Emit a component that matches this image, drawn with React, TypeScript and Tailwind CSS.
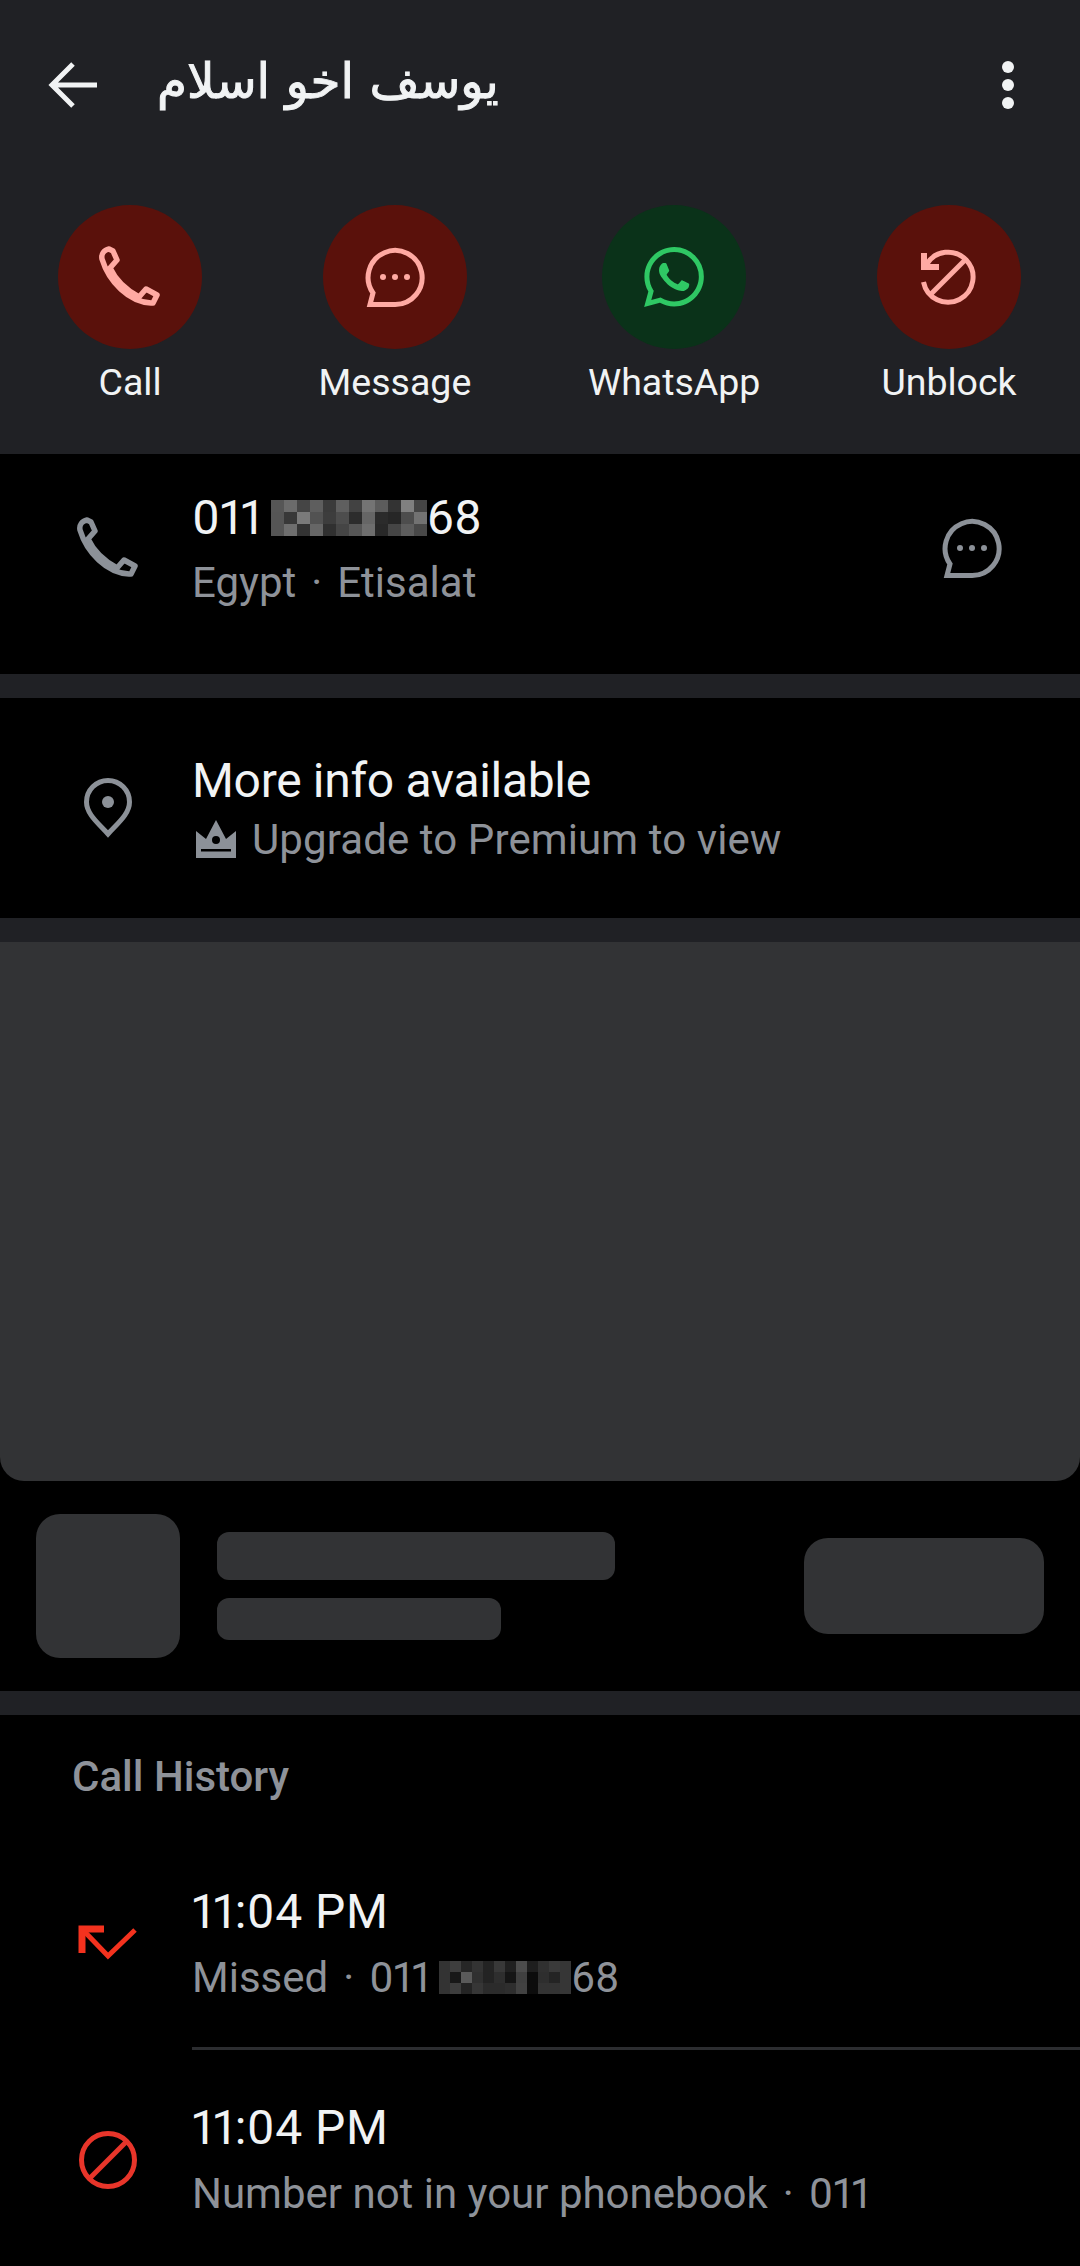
import { SiWhatsapp } from 'react-icons/si'

const PIXELS_LARGE = [
  '#565656', '#6b6b6b', '#454545', '#5e5e5e', '#3b3b3b', '#5f5f5f', '#424242', '#747474', '#5c5c5c', '#333333', '#808080', '#454545',
  '#555555', '#383838', '#7a7a7a', '#525252', '#3d3d3d', '#4d4d4d', '#2c2c2c', '#666666', '#2b2b2b', '#262626', '#4d4d4d', '#727272',
  '#555555', '#6e6e6e', '#333333', '#666666', '#303030', '#454545', '#565656', '#6e6e6e', '#282828', '#454545', '#5d5d5d', '#484848',
]

const PIXELS_SMALL = [
  '#333333', '#3e3e3e', '#262626', '#333333', '#232323', '#383838', '#202020', '#4c4c4c', '#1e1e1e', '#303030', '#3a3a3a', '#363636',
  '#333333', '#181818', '#5a5a5a', '#303030', '#232323', '#2e2e2e', '#151515', '#404040', '#0c0c0c', '#2e2e2e', '#242424', '#363636',
  '#333333', '#3d3d3d', '#242424', '#363636', '#2b2b2b', '#2b2b2b', '#2e2e2e', '#424242', '#0c0c0c', '#333333', '#333333', '#363636',
]

function Pixels({ colors, className }: { colors: string[]; className: string }) {
  return (
    <div className={`grid grid-cols-12 grid-rows-3 shrink-0 ${className}`}>
      {colors.map((c, i) => (
        <div key={i} style={{ backgroundColor: c }} />
      ))}
    </div>
  )
}

function PhoneIcon({ className }: { className: string }) {
  return (
    <svg viewBox="10 12 62 62" className={`w-[62px] h-[62px] ${className}`} fill="none" stroke="currentColor" strokeWidth="5.5" strokeLinejoin="round">
      <path d="M20 15 L24 17 L28 26 L21 34 C27 47 37 56 50 63 L57 55 L68 61 L64 69 L62 69 C40 68 20 48 13 25 C12 20 15 16 20 15 Z" />
    </svg>
  )
}

function BubbleIcon({ className }: { className: string }) {
  return (
    <svg viewBox="0 0 60 60" className={`w-[60px] h-[60px] ${className}`} fill="none" stroke="currentColor" strokeWidth="5">
      <path d="M8 46 A27 27 0 1 1 30 57.5 L5 57.5 Z" />
      <circle cx="18" cy="30" r="3" fill="currentColor" stroke="none" />
      <circle cx="30" cy="30" r="3" fill="currentColor" stroke="none" />
      <circle cx="42" cy="30" r="3" fill="currentColor" stroke="none" />
    </svg>
  )
}

function UnblockIcon({ className }: { className: string }) {
  return (
    <svg viewBox="0 0 90 85" className={`w-[90px] h-[85px] ${className}`} fill="none" stroke="currentColor" strokeWidth="5">
      <path d="M22.5 29.5 A25 25 0 1 1 19.5 47" />
      <path d="M61.5 24.5 L26.5 59.5" />
      <path d="M20 18 V32 H35" strokeWidth="6" />
    </svg>
  )
}

function ActionButton({ label, bg, children }: { label: string; bg: string; children: React.ReactNode }) {
  return (
    <div className="flex flex-col items-center">
      <div className={`w-[144px] h-[144px] rounded-full flex items-center justify-center ${bg}`}>{children}</div>
      <span className="mt-[7px] h-[52px] leading-[52px] text-[37.5px] text-[#f1f3f4]">{label}</span>
    </div>
  )
}

function Dot() {
  return <span className="mx-[15px]">·</span>
}

function Gap() {
  return <div className="h-[24px] bg-[#202125]" />
}

export default function App() {
  return (
    <div className="w-[1080px] h-[2266px] overflow-hidden bg-black font-['Roboto',sans-serif] proportional-nums">
      <header className="h-[454px] bg-[#202125]">
        <div className="h-[170px] flex items-center pl-[48px] pr-[66px]">
          <svg viewBox="0 0 50 48" className="w-[50px] h-[48px] text-[#f1f3f4]" fill="none" stroke="currentColor" strokeWidth="5">
            <path d="M49 24 H5 M25 3 L4 24 L25 45" />
          </svg>
          <h1 dir="rtl" className="ml-[59px] -mt-[8px] text-[48.5px] leading-[60px] text-[#f1f3f4] font-['DejaVu_Sans',sans-serif] font-normal [-webkit-text-stroke:1px_#f1f3f4]">
            يوسف اخو اسلام
          </h1>
          <div className="ml-auto flex flex-col gap-[6px]">
            <span className="w-[12px] h-[12px] rounded-full bg-[#f1f3f4]" />
            <span className="w-[12px] h-[12px] rounded-full bg-[#f1f3f4]" />
            <span className="w-[12px] h-[12px] rounded-full bg-[#f1f3f4]" />
          </div>
        </div>
        <div className="mt-[35px] pl-[58px] pr-[59px] flex justify-between">
          <ActionButton label="Call" bg="bg-[#5a110b]">
            <PhoneIcon className="text-[#ffaaa3]" />
          </ActionButton>
          <ActionButton label="Message" bg="bg-[#5a110b]">
            <BubbleIcon className="text-[#ffaaa3]" />
          </ActionButton>
          <ActionButton label="WhatsApp" bg="bg-[#0a3219]">
            <SiWhatsapp size={60} className="text-[#2fc864]" />
          </ActionButton>
          <ActionButton label="Unblock" bg="bg-[#5a110b]">
            <UnblockIcon className="text-[#ffaaa3]" />
          </ActionButton>
        </div>
      </header>

      <section className="h-[220px] flex">
        <div className="w-[192px] shrink-0 flex justify-center pl-[24px] pt-[63px]">
          <PhoneIcon className="text-[#8c9198]" />
        </div>
        <div className="pt-[34px]">
          <div className="flex items-center h-[60px] text-[48px] text-[#f1f3f4]">
            <span>011</span>
            <Pixels colors={PIXELS_LARGE} className="ml-[9px] w-[156px] h-[37px]" />
            <span>68</span>
          </div>
          <p className="mt-[7px] h-[56px] leading-[56px] text-[42px] text-[#8e9299]">Egypt<Dot />Etisalat</p>
        </div>
        <div className="ml-auto pr-[78px] pt-[64px]">
          <BubbleIcon className="text-[#8c9198]" />
        </div>
      </section>

      <Gap />

      <section className="h-[220px] flex">
        <div className="w-[192px] shrink-0 flex justify-center pl-[24px] pt-[80px]">
          <svg viewBox="0 0 48 60" className="w-[48px] h-[60px] text-[#8c9198]" fill="none" stroke="currentColor" strokeWidth="5">
            <path d="M24 56 C14 45 2.5 36 2.5 24 A21.5 21.5 0 0 1 45.5 24 C45.5 36 34 45 24 56 Z" />
            <circle cx="24" cy="24" r="6" fill="currentColor" stroke="none" />
          </svg>
        </div>
        <div className="pt-[53px]">
          <p className="h-[60px] leading-[60px] text-[48px] tracking-[-0.32px] text-[#f1f3f4]">More info available</p>
          <div className="flex items-center h-[56px] text-[42px] text-[#8e9299]">
            <svg viewBox="0 0 40 40" className="w-[40px] h-[40px] mr-[16px] ml-[4px] text-[#8c9198]">
              <path d="M0 12 L10 20 L20 1 L30 20 L40 12 V39 H0 Z" fill="currentColor" />
              <circle cx="20" cy="21" r="4" fill="#000" />
              <rect x="5" y="30" width="30" height="2.5" fill="#000" />
            </svg>
            <span className="tracking-[0.1px]">Upgrade to Premium to view</span>
          </div>
        </div>
      </section>

      <Gap />

      <div className="h-[539px] bg-[#323335] rounded-b-[24px]" />

      <section className="h-[210px] flex items-center justify-between px-[36px]">
        <div className="flex items-center gap-[37px]">
          <div className="w-[144px] h-[144px] rounded-[24px] bg-[#323335]" />
          <div className="flex flex-col gap-[18px]">
            <div className="w-[398px] h-[48px] rounded-[12px] bg-[#323335]" />
            <div className="w-[284px] h-[42px] rounded-[12px] bg-[#323335]" />
          </div>
        </div>
        <div className="w-[240px] h-[96px] rounded-[24px] bg-[#323335]" />
      </section>

      <Gap />

      <section>
        <h2 className="mt-[32px] pl-[72px] h-[60px] leading-[60px] text-[42px] font-medium text-[#8e9299]">Call History</h2>
        <div className="mt-[27px] h-[216px] flex">
          <div className="w-[192px] shrink-0 pl-[78px] pt-[91px]">
            <svg viewBox="0 0 60 36" className="w-[60px] h-[36px] text-[#f4321e]" fill="none" stroke="currentColor" strokeWidth="5">
              <path d="M4 28 V4 H26" strokeWidth="7" />
              <path d="M4 4 L30 31 L57 5" />
            </svg>
          </div>
          <div className="flex-1 border-b-[3px] border-[#2c2d30]">
            <p className="mt-[48px] h-[60px] leading-[60px] text-[48px] tracking-[0.5px] text-[#f1f3f4]">11:04 PM</p>
            <div className="mt-[7px] flex items-center h-[56px] text-[42px] text-[#8e9299]">
              <span>Missed<Dot />011</span>
              <Pixels colors={PIXELS_SMALL} className="ml-[9px] w-[132px] h-[33px]" />
              <span>68</span>
            </div>
          </div>
        </div>
        <div className="h-[216px] flex">
          <div className="w-[192px] shrink-0 pl-[79px] pt-[81px]">
            <svg viewBox="0 0 58 58" className="w-[58px] h-[58px] text-[#e8352a]" fill="none" stroke="currentColor" strokeWidth="5">
              <circle cx="29" cy="29" r="26.5" />
              <path d="M48 10 L10 48" />
            </svg>
          </div>
          <div className="flex-1">
            <p className="mt-[48px] h-[60px] leading-[60px] text-[48px] tracking-[0.5px] text-[#f1f3f4]">11:04 PM</p>
            <p className="mt-[8px] h-[56px] leading-[56px] text-[42px] text-[#8e9299]">Number not in your phonebook<Dot />011</p>
          </div>
        </div>
      </section>
    </div>
  )
}
